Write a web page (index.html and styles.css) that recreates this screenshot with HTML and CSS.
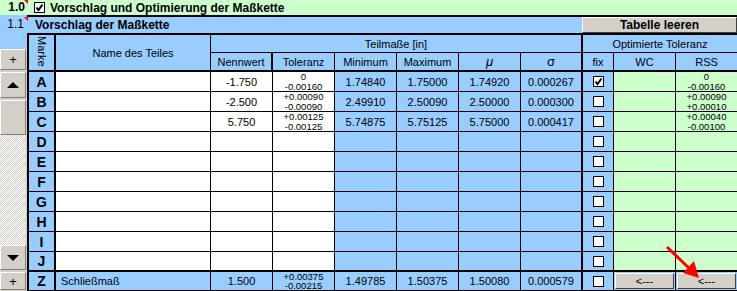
FILE: index.html
```html
<!DOCTYPE html>
<html lang="de">
<head>
    <meta charset="UTF-8">
    <title>Vorschlag der Maßkette</title>
    <link rel="stylesheet" href="styles.css">
</head>
<body>
<div class="sheet">
    <div class="top">
        <div class="lbl bold">1.0<span class="note"></span></div>
        <span class="box on"><svg viewBox="0 0 9 9" width="9" height="9"><path d="M1.5 4.5 L3.5 7 L7.5 1.5" fill="none" stroke="#000" stroke-width="2"/></svg></span>
        <span class="top-title">Vorschlag und Optimierung der Maßkette</span>
    </div>
    <div class="main">
        <div class="side">
            <div class="side-head"><div class="lbl">1.1<span class="note"></span></div></div>
            <div class="sbtn s-plus">+</div>
            <div class="sbtn s-up"><span class="tri up"></span></div>
            <div class="sbtn s-thumb"></div>
            <div class="s-track"></div>
            <div class="sbtn s-down"><span class="tri down"></span></div>
            <div class="sbtn s-plus2">+</div>
        </div>
        <div class="content">
            <div class="sub">
                <span class="sub-title">Vorschlag der Maßkette</span>
                <div class="xbtn clear">Tabelle leeren</div>
            </div>
            <div class="grid">
                <!-- header -->
                <div class="h h-marke"><span>Marke</span></div>
                <div class="h h-name">Name des Teiles</div>
                <div class="h h-teil">Teilmaße [in]</div>
                <div class="h h-opt">Optimierte Toleranz</div>
                <div class="row hrow">
                    <div>Nennwert</div><div>Toleranz</div><div>Minimum</div><div>Maximum</div>
                    <div class="mu">μ</div><div class="sig">σ</div><div>fix</div><div>WC</div><div>RSS</div>
                </div>

                <div class="row">
                    <div class="mk">A</div><div></div><div>-1.750</div>
                    <div class="tol"><span>0</span><span>-0.00160</span></div>
                    <div>1.74840</div><div>1.75000</div><div>1.74920</div><div>0.000267</div>
                    <div><span class="box on"><svg viewBox="0 0 9 9" width="9" height="9"><path d="M1.5 4.5 L3.5 7 L7.5 1.5" fill="none" stroke="#000" stroke-width="2"/></svg></span></div>
                    <div></div>
                    <div class="tol"><span>0</span><span>-0.00160</span></div>
                </div>
                <div class="row">
                    <div class="mk">B</div><div></div><div>-2.500</div>
                    <div class="tol"><span>+0.00090</span><span>-0.00090</span></div>
                    <div>2.49910</div><div>2.50090</div><div>2.50000</div><div>0.000300</div>
                    <div><span class="box"></span></div>
                    <div></div>
                    <div class="tol"><span>+0.00090</span><span>+0.00010</span></div>
                </div>
                <div class="row">
                    <div class="mk">C</div><div></div><div>5.750</div>
                    <div class="tol"><span>+0.00125</span><span>-0.00125</span></div>
                    <div>5.74875</div><div>5.75125</div><div>5.75000</div><div>0.000417</div>
                    <div><span class="box"></span></div>
                    <div></div>
                    <div class="tol"><span>+0.00040</span><span>-0.00100</span></div>
                </div>
                <div class="row">
                    <div class="mk">D</div><div></div><div></div><div></div><div></div><div></div><div></div><div></div>
                    <div><span class="box"></span></div><div></div><div></div>
                </div>
                <div class="row">
                    <div class="mk">E</div><div></div><div></div><div></div><div></div><div></div><div></div><div></div>
                    <div><span class="box"></span></div><div></div><div></div>
                </div>
                <div class="row">
                    <div class="mk">F</div><div></div><div></div><div></div><div></div><div></div><div></div><div></div>
                    <div><span class="box"></span></div><div></div><div></div>
                </div>
                <div class="row">
                    <div class="mk">G</div><div></div><div></div><div></div><div></div><div></div><div></div><div></div>
                    <div><span class="box"></span></div><div></div><div></div>
                </div>
                <div class="row">
                    <div class="mk">H</div><div></div><div></div><div></div><div></div><div></div><div></div><div></div>
                    <div><span class="box"></span></div><div></div><div></div>
                </div>
                <div class="row">
                    <div class="mk">I</div><div></div><div></div><div></div><div></div><div></div><div></div><div></div>
                    <div><span class="box"></span></div><div></div><div></div>
                </div>
                <div class="row last">
                    <div class="mk">J</div><div></div><div></div><div></div><div></div><div></div><div></div><div></div>
                    <div><span class="box"></span></div><div></div><div></div>
                </div>

                <div class="row zrow">
                    <div class="mk">Z</div><div class="zname">Schließmaß</div><div>1.500</div>
                    <div class="tol"><span>+0.00375</span><span>-0.00215</span></div>
                    <div>1.49785</div><div>1.50375</div><div>1.50080</div><div>0.000579</div>
                    <div><span class="box"></span></div>
                    <div><span class="xbtn back">&lt;---</span></div>
                    <div><span class="xbtn back">&lt;---</span></div>
                </div>
            </div>
        </div>
    </div>
    <svg class="pointer" width="44" height="42" viewBox="0 0 44 42">
        <line x1="6" y1="5" x2="30" y2="28" stroke="#ff0000" stroke-width="3"/>
        <polygon points="38,36 22,31 33,19" fill="#ff0000"/>
    </svg>
</div>
</body>
</html>
```

FILE: styles.css
```css
:root {
    --green: #ccffcc;
    --blue: #99ccff;
    --face: #d4d0c8;
    --shadow: #808080;
}
body {
    margin: 0;
    font-family: 'Liberation Sans', Arial, sans-serif;
    font-size: 11px;
    color: #000;
    background: #fff;
    overflow: hidden;
}
.sheet {
    position: relative;
    width: 737px;
    height: 291px;
    overflow: hidden;
}
.top {
    display: flex;
    align-items: center;
    height: 15px;
    background: var(--green);
}
.lbl {
    position: relative;
    width: 28px;
    box-sizing: border-box;
    padding-right: 3px;
    text-align: right;
    font-size: 12px;
    line-height: 15px;
}
.lbl.bold {
    font-weight: bold;
}
.note {
    position: absolute;
    top: 0;
    right: 0;
    width: 0;
    height: 0;
    border-top: 4px solid #ff0000;
    border-left: 4px solid transparent;
}
.box {
    display: inline-flex;
    align-items: center;
    justify-content: center;
    width: 11px;
    height: 11px;
    box-sizing: border-box;
    border: 1px solid #000;
    background: #fff;
}
.top .box {
    margin-left: 6px;
}
.top-title {
    margin-left: 5px;
    font-weight: bold;
    font-size: 12px;
}
.main {
    display: flex;
}
.side {
    display: flex;
    flex-direction: column;
    width: 27px;
    height: 276px;
    background: var(--face);
}
.side-head {
    height: 34px;
    background: var(--blue);
}
.side-head .lbl {
    width: 27px;
    margin-top: 2px;
    font-weight: normal;
}
.side-head .note {
    right: -1px;
}
.sbtn {
    display: flex;
    align-items: center;
    justify-content: center;
    width: 26px;
    box-sizing: border-box;
    background: var(--face);
    border: 1px solid;
    border-color: #fff var(--shadow) var(--shadow) #fff;
    font-size: 13px;
}
.s-plus { height: 21px; margin-bottom: 2px; }
.s-up { height: 26px; margin-bottom: 2px; }
.s-thumb { height: 35px; }
.s-track {
    height: 110px;
    width: 26px;
    background: repeating-conic-gradient(var(--face) 0 25%, #fff 0 50%) 0 0 / 2px 2px;
}
.s-down { height: 25px; margin-bottom: 2px; }
.s-plus2 { height: 18px; }
.tri {
    width: 0;
    height: 0;
    border-left: 6px solid transparent;
    border-right: 6px solid transparent;
}
.tri.up { border-bottom: 6px solid #000; }
.tri.down { border-top: 6px solid #000; }
.content {
    width: 710px;
    border-top: 2px solid #000;
}
.sub {
    display: flex;
    align-items: center;
    height: 16px;
    background: var(--blue);
    border-bottom: 2px solid #000;
}
.sub-title {
    padding-left: 8px;
    font-weight: bold;
    font-size: 12px;
}
.xbtn {
    display: flex;
    align-items: center;
    justify-content: center;
    box-sizing: border-box;
    background: var(--face);
    border: 1px solid;
    border-color: #fff #404040 #404040 #fff;
}
.clear {
    margin-left: auto;
    width: 155px;
    height: 16px;
    font-weight: bold;
    font-size: 12px;
}
.grid {
    display: grid;
    grid-template-columns: 27px 155px 62px 62px 62px 62px 62px 62px 31px 62px 61px;
    grid-template-rows: 18px 19px repeat(10, 20px) 19px;
    border-left: 2px solid #000;
    background: var(--blue);
}
.grid .h,
.row > div {
    display: flex;
    align-items: center;
    justify-content: center;
    box-sizing: border-box;
    border-right: 1px solid #000;
    border-bottom: 1px solid #000;
    background: var(--blue);
    overflow: hidden;
    white-space: nowrap;
}
.h-marke {
    grid-row: 1 / 3;
    grid-column: 1;
    border-right-width: 2px !important;
    border-bottom-width: 2px !important;
    align-items: flex-start !important;
}
.h-marke span {
    writing-mode: vertical-rl;
    margin-top: 1px;
}
.h-name {
    grid-row: 1 / 3;
    grid-column: 2;
    border-bottom-width: 2px !important;
}
.h-teil {
    grid-row: 1;
    grid-column: 3 / 9;
    border-right-width: 2px !important;
}
.h-opt {
    grid-row: 1;
    grid-column: 9 / 12;
    border-right: 0 !important;
}
.row {
    display: contents;
}
.row > div:nth-child(1) {
    border-right-width: 2px;
}
.row > div:nth-child(8) {
    border-right-width: 2px;
}
.row > div:nth-child(11) {
    border-right: 0;
}
.hrow > div {
    grid-row: 2;
    border-bottom-width: 2px;
}
.hrow > div:nth-child(1) { grid-column: 3; }
.hrow > div:nth-child(6) { border-right-width: 2px; }
.hrow > div:nth-child(8) { border-right-width: 1px; }
.hrow > div:nth-child(9) { border-right: 0; }
.mu {
    font-style: italic;
    font-size: 13px;
}
.sig {
    font-size: 13px;
}
.row > div:nth-child(2),
.row > div:nth-child(3),
.row > div:nth-child(4) {
    background: #fff;
}
.row > div:nth-child(10),
.row > div:nth-child(11) {
    background: var(--green);
}
.hrow > div {
    background: var(--blue) !important;
}
.row.last > div {
    border-bottom-width: 2px;
}
.zrow > div {
    background: var(--blue) !important;
}
.mk {
    font-weight: bold;
    font-size: 14px;
}
.tol {
    flex-direction: column;
    font-size: 9.5px;
    line-height: 9.5px;
}
.zname {
    justify-content: flex-start !important;
    padding-left: 5px;
}
.back {
    width: 59px;
    height: 16px;
    font-size: 11px;
}
.pointer {
    position: absolute;
    left: 661px;
    top: 242px;
}
```
